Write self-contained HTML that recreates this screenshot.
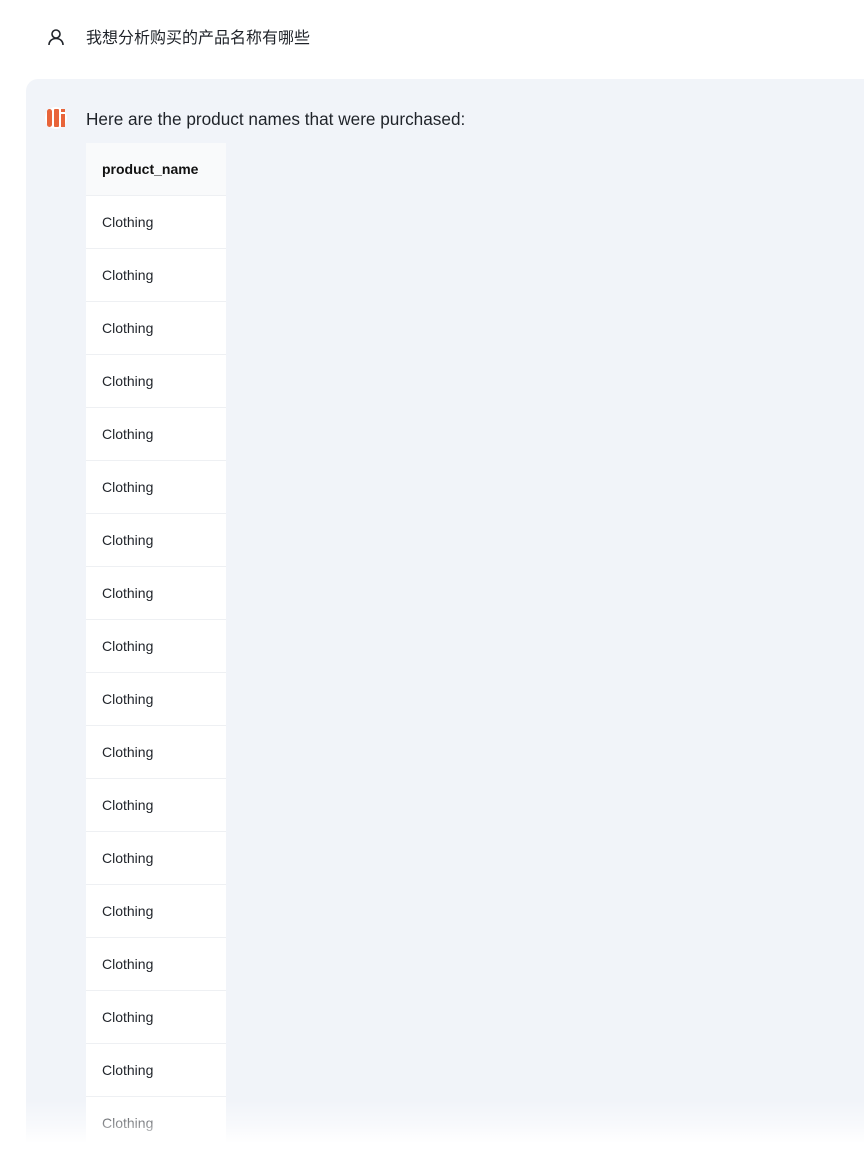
<!DOCTYPE html>
<html><head><meta charset="utf-8"><style>
html,body{margin:0;width:864px;height:1151px;overflow:hidden}
body{background:#fff;font-family:"Liberation Sans","Noto Sans CJK SC",sans-serif;color:#1f2329;position:relative}
.q{position:absolute;left:86px;top:29px;font-size:16px;line-height:20px}
.uicon{position:absolute;left:47px;top:28px}
.box{position:absolute;left:26px;top:79px;width:900px;height:1072px;background:#f1f4f9;border-radius:12px 0 0 0}
.logo{position:absolute;left:45px;top:107px}
.ans{position:absolute;left:86px;top:108px;font-size:17.2px;line-height:22px}
table{position:absolute;left:86px;top:143px;width:140px;border-collapse:collapse;background:#fff}
td,th{height:52px;padding:0 0 0 16px;text-align:left;font-size:14px;border-bottom:1px solid #eef0f3}
th{background:#f9fafb;font-weight:bold;color:#111}
.fade{position:absolute;left:0;top:1100px;width:864px;height:51px;background:linear-gradient(rgba(255,255,255,0),rgba(255,255,255,0.5) 50%,#fff 85%)}
</style></head><body>
<svg class="uicon" width="18" height="18" viewBox="0 0 18 18" fill="none" stroke="#1f2329" stroke-width="1.6"><circle cx="9" cy="6" r="4"/><path d="M2 17c0-4 3-6.5 7-6.5s7 2.5 7 6.5"/></svg>
<div class="q">我想分析购买的产品名称有哪些</div>
<div class="box"></div>
<svg class="logo" width="22" height="22" viewBox="0 0 22 22"><circle cx="11" cy="11" r="11" fill="#fff"/><rect x="2" y="2" width="5" height="18" rx="2.5" fill="#e8643a"/><rect x="9" y="2" width="5" height="18" rx="1" fill="#e8643a"/><rect x="16" y="2" width="4" height="3" fill="#e8643a"/><rect x="16" y="7" width="4" height="13" fill="#e8643a"/></svg>
<div class="ans">Here are the product names that were purchased:</div>
<table><tr><th>product_name</th></tr>
<tr><td>Clothing</td></tr><tr><td>Clothing</td></tr><tr><td>Clothing</td></tr><tr><td>Clothing</td></tr><tr><td>Clothing</td></tr><tr><td>Clothing</td></tr><tr><td>Clothing</td></tr><tr><td>Clothing</td></tr><tr><td>Clothing</td></tr><tr><td>Clothing</td></tr><tr><td>Clothing</td></tr><tr><td>Clothing</td></tr><tr><td>Clothing</td></tr><tr><td>Clothing</td></tr><tr><td>Clothing</td></tr><tr><td>Clothing</td></tr><tr><td>Clothing</td></tr><tr><td style="border:0">Clothing</td></tr>
</table>
<div class="fade"></div>
</body></html>
